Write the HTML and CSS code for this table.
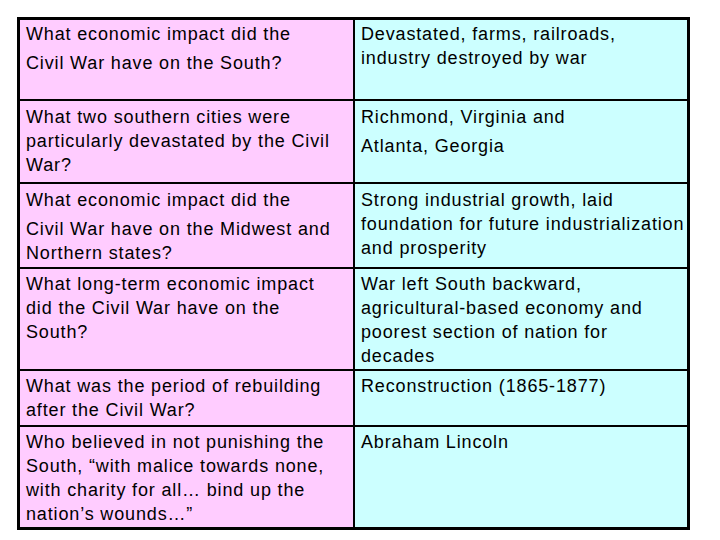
FILE: index.html
```html
<!DOCTYPE html>
<html>
<head>
<meta charset="utf-8">
<link rel="stylesheet" href="styles.css">
</head>
<body>
<div class="table">
  <div class="cell q r1"><span class="ln tall">What economic impact did the</span><span class="ln">Civil War have on the South?</span></div>
  <div class="cell a r1"><span class="ln">Devastated, farms, railroads,</span><span class="ln">industry destroyed by war</span></div>

  <div class="cell q r2"><span class="ln">What two southern cities were</span><span class="ln">particularly devastated by the Civil</span><span class="ln">War?</span></div>
  <div class="cell a r2"><span class="ln tall">Richmond, Virginia and</span><span class="ln">Atlanta, Georgia</span></div>

  <div class="cell q r3"><span class="ln tall">What economic impact did the</span><span class="ln">Civil War have on the Midwest and</span><span class="ln">Northern states?</span></div>
  <div class="cell a r3"><span class="ln">Strong industrial growth, laid</span><span class="ln">foundation for future industrialization</span><span class="ln">and prosperity</span></div>

  <div class="cell q r4"><span class="ln">What long-term economic impact</span><span class="ln">did the Civil War have on the</span><span class="ln">South?</span></div>
  <div class="cell a r4"><span class="ln">War left South backward,</span><span class="ln">agricultural-based economy and</span><span class="ln">poorest section of nation for</span><span class="ln">decades</span></div>

  <div class="cell q r5"><span class="ln">What was the period of rebuilding</span><span class="ln">after the Civil War?</span></div>
  <div class="cell a r5"><span class="ln">Reconstruction (1865-1877)</span></div>

  <div class="cell q r6"><span class="ln">Who believed in not punishing the</span><span class="ln">South, “with malice towards none,</span><span class="ln">with charity for all… bind up the</span><span class="ln">nation’s wounds…”</span></div>
  <div class="cell a r6"><span class="ln">Abraham Lincoln</span></div>
</div>
</body>
</html>
```
FILE: styles.css
```css
html, body {
  margin: 0;
  padding: 0;
  background: #ffffff;
}
body {
  padding: 17px 0 0 17px;
}
.table {
  display: grid;
  grid-template-columns: 333px 332px;
  grid-template-rows: 79px 81px 83px 100px 54px 100px;
  gap: 2px;
  width: 667px;
  background: #000000;
  border: 3px solid #000000;
}
.cell {
  font-family: "Liberation Sans", Arial, sans-serif;
  font-size: 18px;
  letter-spacing: 0.85px;
  line-height: 24px;
  color: #000000;
  padding: 3px 0 0 6px;
  overflow: hidden;
  white-space: nowrap;
}
.q {
  background: #ffccff;
}
.a {
  background: #ccffff;
}
.r1 { padding-top: 2px; }
.r2, .r3 { padding-top: 4px; }
.ln {
  display: block;
}
.ln.tall {
  margin-bottom: 5px;
}
```
